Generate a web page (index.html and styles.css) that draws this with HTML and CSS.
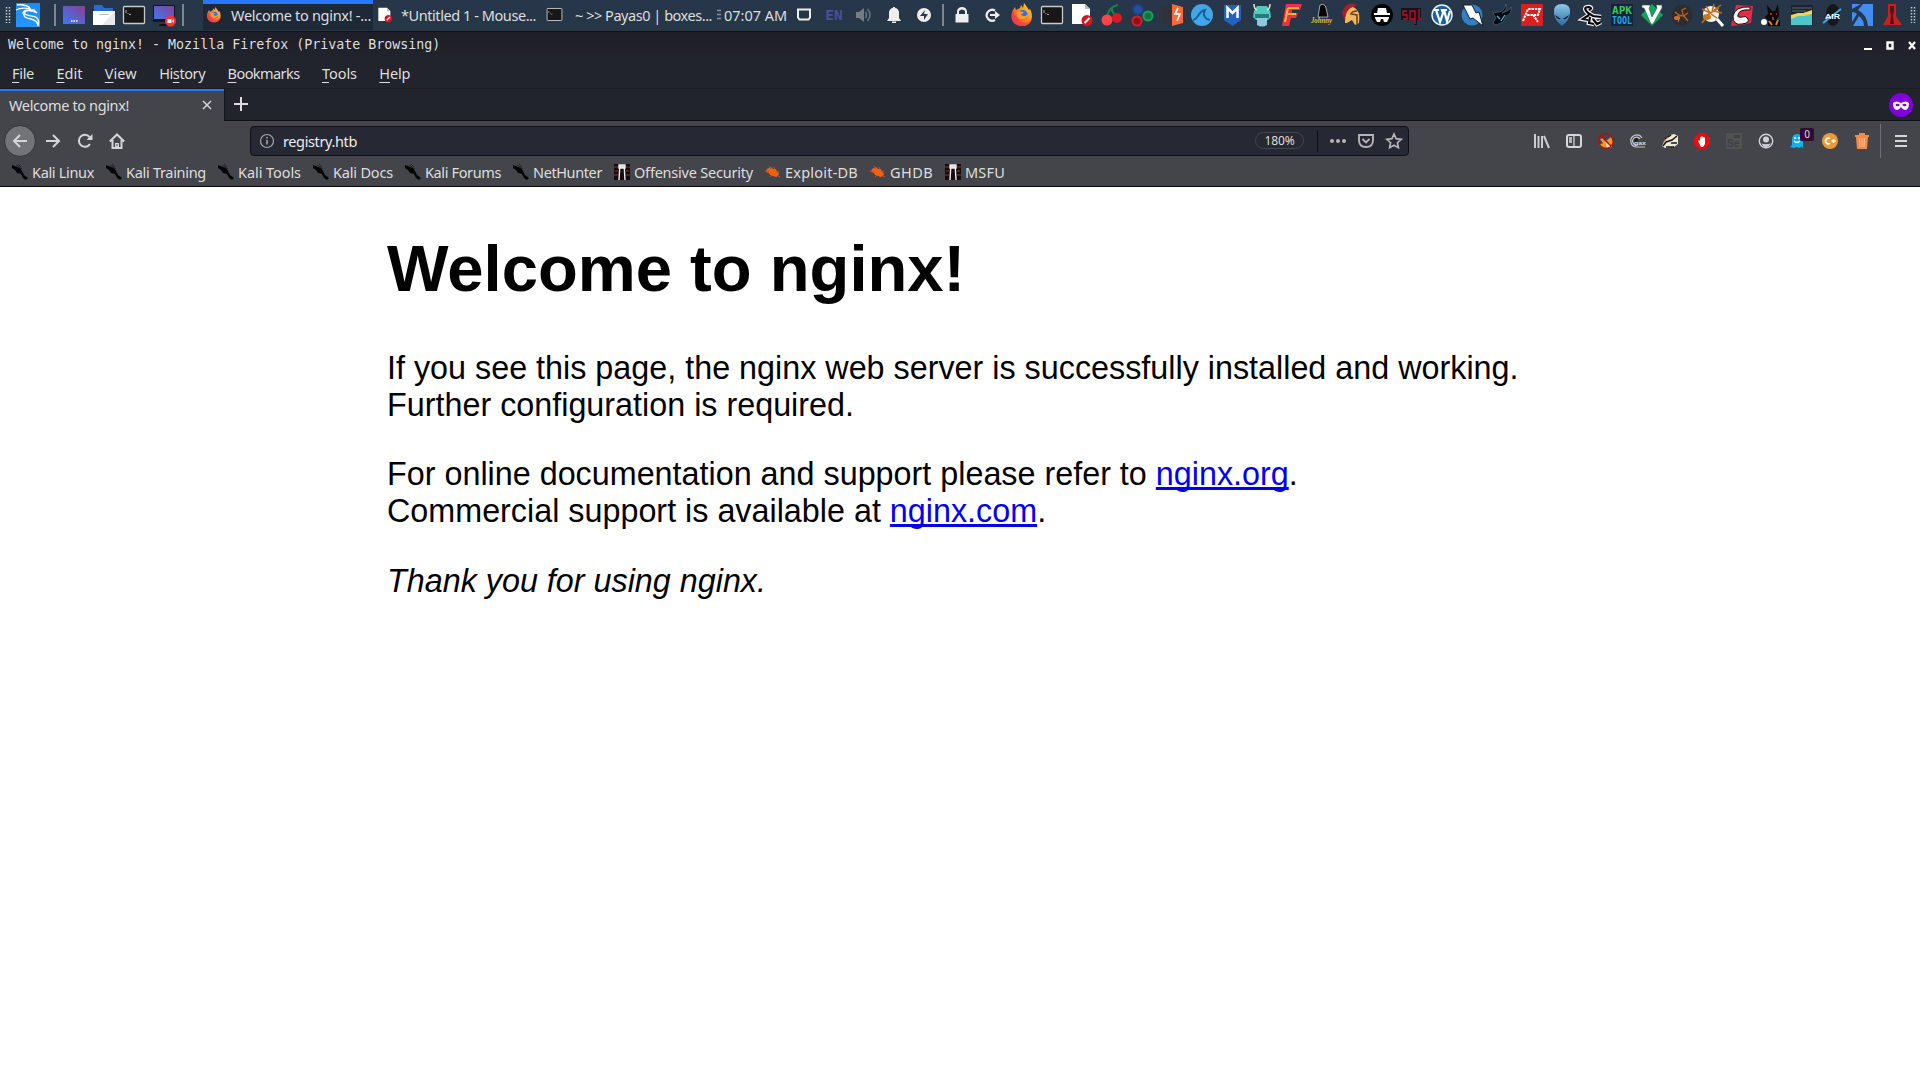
FILE: index.html
```html
<!DOCTYPE html>
<html lang="en">
<head>
<meta charset="utf-8">
<title>Welcome to nginx!</title>
<link rel="stylesheet" href="styles.css">
</head>
<body>
<svg class="defs" width="0" height="0" aria-hidden="true">
  <defs>
    <linearGradient id="desk" x1="0" y1="1" x2="1" y2="0"><stop offset="0" stop-color="#3a7af0"/><stop offset="1" stop-color="#8a3f96"/></linearGradient>
    <linearGradient id="blue" x1="0" y1="0" x2="0" y2="1"><stop offset="0" stop-color="#1a8df5"/><stop offset="1" stop-color="#2795ff"/></linearGradient>
    <linearGradient id="fire" x1="1" y1="0" x2="0" y2="1"><stop offset="0" stop-color="#ffe23c"/><stop offset=".45" stop-color="#ff8a1c"/><stop offset="1" stop-color="#f0245c"/></linearGradient>
    <linearGradient id="alien" x1="0" y1="0" x2="0" y2="1"><stop offset="0" stop-color="#8cc8ee"/><stop offset="1" stop-color="#2c6a9c"/></linearGradient>
    <symbol id="firefox" viewBox="0 0 24 24"><path d="M3 7l2-3 1 3 4-2 1-3 2 3 1-5 3 4 2 3 1-1c4 7 2 17-8 17C3 23-1 15 3 7z" fill="url(#fire)"/><path d="M3 8c-4 9 2 15 9 15 6 0 10-4 10-8-3 5-8 6-12 3L5 12z" fill="#f3374f" opacity=".65"/><circle cx="12.5" cy="12" r="5" fill="#2c6ff0"/><path d="M7 9c2-2 4 0 7 0l-3 3c3 2 5 1 7-1 0 6-8 8-11 2z" fill="#ff9a24"/></symbol>
    <symbol id="term" viewBox="0 0 24 24"><rect x="1.5" y="3.5" width="21" height="17" rx="1" fill="#171717" stroke="#c9c9c9" stroke-width="1.3"/><path d="M4 7v3M5.5 10.5h1M7 11.5h2" stroke="#aaa" stroke-width="1"/></symbol>
    <symbol id="note" viewBox="0 0 24 24"><path d="M2 1h13l5 5v15H2z" fill="#fff"/><path d="M15 1l5 5h-5z" fill="#bbb"/><circle cx="17" cy="17.500" r="5.500" fill="#d9141e"/><path d="M14.500 20l5-5" stroke="#fff" stroke-width="2"/></symbol>
    <symbol id="kali" viewBox="0 0 16 16"><path d="M0 1l5 2 3 1 2 3 2 4 4 3-2 2-3-2-2-4-4-1-2-3-3-2z" fill="#050505"/><path d="M4 1l6 4M6 0l3 3" stroke="#1c1d20" stroke-width=".8"/></symbol>
    <symbol id="offsec" viewBox="0 0 16 16"><path d="M0 0h16v16H0z" fill="#170b0d"/><path d="M0 3h4M1 7h3M0 11h4M12 3h4M12 7h3M12 11h4" stroke="#783c3a" stroke-width="1"/><path d="M5 1h6v3H5zM5.700 4L5 16M10.300 4l.7 12" fill="#ddd" stroke="#eee" stroke-width="1.400"/></symbol>
    <symbol id="edb" viewBox="0 0 16 16"><path d="M2 5l2-1 2-1 2 2 3 0 1 3 2 1-1 3-2 1-3-1-3-1-1-2-3-1z" fill="#f26113"/><path d="M0 7l4 1M4 2l2 3M9 3l1 3M5 13l2-2M14 7l-3 1M15 13l-3-2" stroke="#bd552b"/></symbol>
  </defs>
</svg>

<header class="panel">
  <div class="panel-left">
    <svg class="grip" viewBox="0 0 6 16"><path d="M1.500 0v16M4.500 0v16" stroke="#c5ccd6" stroke-width="1.500" stroke-dasharray="1.500 1.500"/></svg>
    <svg class="dragon" viewBox="0 0 24 24"><path d="M0 0h24v24H0z" fill="url(#blue)"/><path d="M1 2c6-1 11 1 13 3M0 7c5-3 10-2 15-1M5 2c4 0 7 1 9 3M7 10c1-4 6-3 11-3l3 3-5-2c-4-1-8 0-7 3 1 2 9 1 12 4 2 2 2 5 1 8 0-4-3-6-7-7-5-1-8-2-7-6z" fill="none" stroke="#fff" stroke-width="1.300"/></svg>
    <i class="rule"></i>
    <svg class="launch" viewBox="0 0 24 24"><path d="M1 3h22v18H1z" fill="url(#desk)"/><path d="M9 18h1.500M11.500 18H13M14 18h1.500" stroke="#fff" stroke-width="1.500"/></svg>
    <svg class="launch" viewBox="0 0 24 24"><path d="M2 2h8l2 3h9v8H2z" fill="#2d68db"/><path d="M1 8h22v14H1z" fill="#fff"/><path d="M23 8v14H10z" fill="#e9e9e9"/><path d="M7.500 11.500h9" stroke="#bbb"/></svg>
    <svg class="launch"><use href="#term"/></svg>
    <svg class="launch" viewBox="0 0 24 24"><path d="M8 21h8l1 2H7z" fill="#111"/><path d="M1 2h22v17H1z" fill="#15151d"/><path d="M2 3h20v13H2z" fill="url(#desk)"/><circle cx="18.500" cy="18" r="5.500" fill="#f33"/><path d="M15.500 16h4v4h-4zM20 18l2-2v4z" fill="#fff"/></svg>
    <i class="rule rule-end"></i>
  </div>
  <nav class="tasks">
    <div class="task active"><svg class="task-icon"><use href="#firefox"/></svg><span data-fit="140">Welcome to nginx! -...</span></div>
    <div class="task"><svg class="task-icon"><use href="#note"/></svg><span data-fit="135">*Untitled 1 - Mouse...</span></div>
    <div class="task wide"><svg class="task-icon"><use href="#term"/></svg><span data-fit="137">~ &gt;&gt; Payas0 | boxes...</span></div>
  </nav>
  <svg class="mini-grip" viewBox="0 0 4 12"><path d="M0 1.500h4M0 5.500h4M0 9.500h4" stroke="#8a929c" stroke-width="1.500"/></svg>
  <time class="clock" data-fit="63">07:07 AM</time>
  <div class="dock tray">
    <svg viewBox="0 0 24 24"><path d="M6 6.500h12v8l-1.500 2h-9L6 14.500z" fill="none" stroke="#eee" stroke-width="2"/></svg>
    <b class="lang">EN</b>
    <svg viewBox="0 0 24 24"><path d="M4 9h3l5-4v14l-5-4H4z" fill="#727d87"/><path d="M13.500 9q2 3 0 6M15.500 6q5 6 0 12" fill="none" stroke="#66727d" stroke-width="1.500"/></svg>
    <svg viewBox="0 0 24 24"><path d="M5 18l2-3V9q1-4 4-4V4h2v1q3 0 4 4v6l2 3zM10 18.500h4v1.500h-4z" fill="#eee"/></svg>
    <svg viewBox="0 0 24 24"><circle cx="12" cy="12" r="7" fill="#eee"/><path d="M13 7l-5 6h4v4l4-6h-4z" fill="#27394a"/></svg>
  </div>
  <i class="rule rule-tray"></i>
  <div class="dock">
    <svg viewBox="0 0 24 24"><path d="M5.500 11h13v8.500h-13zM7 11V8q1-4 5-4t5 4v3h-2V8q-3-3-6 0v3z" fill="#eee"/></svg>
    <svg viewBox="0 0 24 24"><path d="M15 7.500A5.500 5.500 0 1 0 15 17M10 12h8" fill="none" stroke="#eee" stroke-width="2.200"/><path d="M15 8l5 4-5 4z" fill="#eee"/></svg>
    <svg><use href="#firefox"/></svg>
    <svg><use href="#term"/></svg>
    <svg viewBox="0 0 24 24"><use href="#note"/></svg>
    <svg viewBox="0 0 24 24"><path d="M7 13Q9 4 18 2M12 5q0 5 4 8" fill="none" stroke="#18824e" stroke-width="2"/><circle cx="7" cy="17" r="5.500" fill="#ff4547"/><circle cx="17" cy="15" r="5" fill="#d51c25"/></svg>
    <svg viewBox="0 0 24 24"><circle cx="8" cy="6.500" r="4.800" fill="#274fa0" stroke="#1d428d" stroke-width="2"/><circle cx="18" cy="13" r="4.500" fill="#12733f" stroke="#14a25b" stroke-width="2"/><circle cx="7" cy="18" r="4.500" fill="#921018" stroke="#d0202b" stroke-width="2"/></svg>
    <svg viewBox="0 0 24 24"><path d="M1 4l11-2v20L1 20z" fill="#303139"/><path d="M12 1l11 3v16l-11 3z" fill="#ff6734"/><path d="M18 5l-3 6h5l-3 7" stroke="#fff" stroke-width="1.700" fill="none"/></svg>
    <svg viewBox="0 0 24 24"><circle cx="12" cy="12" r="11" fill="#43a6e8"/><path d="M3 17c5 0 5-9 12-10-3 5 0 9 5 10" stroke="#16639c" stroke-width="2" fill="none"/></svg>
    <svg viewBox="0 0 24 24"><path d="M4 2h17v15l-8.500 6L4 17z" fill="#2261bd"/><path d="M7.500 15V5l5 5 5-5v10" fill="none" stroke="#fff" stroke-width="2.500"/></svg>
    <svg viewBox="0 0 24 24"><path d="M4 8l3-5h10l3 5 1 6-3 3H6l-3-3z" fill="#53c9bd"/><path d="M5 11h14v4H5z" fill="#247b80"/><path d="M7 15h10v7q-5 3-10 0z" fill="#8fc6d8"/><path d="M4 1q0 5 3 6M20 1q0 5-3 6" fill="none" stroke="#ece7c5" stroke-width="1.500"/></svg>
    <svg viewBox="0 0 24 24"><path d="M6 1h16l-2 6h-8v3h6l-2 5h-5l-2 8H2z" fill="#f12e48"/><path d="M8 5h11M8 5L5 19M8 11h8" fill="none" stroke="#ffb638" stroke-width="2"/></svg>
    <svg viewBox="0 0 24 24"><path d="M10 2q5-2 6 3l2 9H8z" fill="#030303" stroke="#ddd" stroke-width=".7"/><text x="1" y="20" textLength="21" lengthAdjust="spacingAndGlyphs" class="johnny">Johnny</text></svg>
    <svg viewBox="0 0 24 24"><path d="M2 10Q6-3 17 2L9 7 5 18z" fill="#a41f26"/><path d="M5 20Q5 6 13 4q8 3 6 16l-4 2-3-5-5 3z" fill="#efb95c"/><path d="M17 8q-5 0-6 3l6 1v9" fill="none" stroke="#76351e" stroke-width="1.500"/></svg>
    <svg viewBox="0 0 24 24"><circle cx="12" cy="12" r="11" fill="#040404"/><path d="M8 5h8l1 5h3v2H4v-2h3zM5 14h14v1l-2 4h-3l-1-3h-2l-1 3H7l-2-4z" fill="#fff"/></svg>
    <svg viewBox="0 0 24 24"><path d="M1 5h20v12h-4v5h-3v-5H1z" fill="#1a1018"/><path d="M7 8H3v4h4v4H3M10 8h5v8h-5zM15 16v5M19 6v10h3" fill="none" stroke="#b91424" stroke-width="1.300"/></svg>
    <svg viewBox="0 0 24 24"><circle cx="12" cy="12" r="10" fill="#1d609e" stroke="#e8f1fa" stroke-width="1.500"/><path d="M4 7h5M6 7l4 12 3-9-1-3h5M14 7l3 11 3-10" fill="none" stroke="#fff" stroke-width="2.200"/></svg>
    <svg viewBox="0 0 24 24"><circle cx="12" cy="12" r="10.500" fill="#347fc4"/><path d="M3 2h9l4 8 3-1 4 14-10-8-3 1z" fill="#fff" stroke="#101c28"/></svg>
    <svg viewBox="0 0 24 24"><path d="M9 9q6-1 7-8 2 6-4 9l5-2q3-1 4-4 1 7-5 9l-3 6-7 3-3-2 3-5-3-5z" fill="#05090e" stroke="#57819b" stroke-width=".5"/><path d="M7 13l3 3M15 12l-4 6" stroke="#46b3d4" stroke-width="1.300"/></svg>
    <svg viewBox="0 0 24 24"><rect x="1" y="1" width="22" height="22" rx="1" fill="#d91f20"/><path d="M3 18L8 6h12l-2 6H6m7 0l5 7" fill="none" stroke="#fff" stroke-width="2" stroke-dasharray="2.500 .8"/></svg>
    <svg viewBox="0 0 24 24"><path d="M4 10q-1-9 8-9t8 9q-1 8-8 13-7-5-8-13z" fill="url(#alien)"/><path d="M5 12l6 4q-4 1-6-4zM19 12l-6 4q4 1 6-4z" fill="#14182a"/></svg>
    <svg viewBox="0 0 24 24"><path d="M8 10Q2 4 9 4q4 1 0 3M8 10l5 3 8 1M9 12l-6 4 5 1M10 14l-1 6 5 1M13 16l4 5 4-2" fill="none" stroke="#f2f2f2" stroke-width="4.500"/><path d="M8 10Q2 4 9 4q4 1 0 3M8 10l5 3 8 1M9 12l-6 4 5 1M10 14l-1 6 5 1M13 16l4 5 4-2" fill="none" stroke="#060606" stroke-width="2.200"/></svg>
    <svg viewBox="0 0 24 24"><path d="M1 1h22v22H1z" fill="#12253a"/><g class="apk"><text x="2" y="11" textLength="20" lengthAdjust="spacingAndGlyphs" fill="#3dc55c">APK</text><text x="2" y="21" textLength="20" lengthAdjust="spacingAndGlyphs" fill="#19a7ed">TOOL</text></g></svg>
    <svg viewBox="0 0 24 24"><path d="M12 1l11 11-11 11L1 12z" fill="#0aa85a"/><path d="M2 2h8v2L9 5l3 9 5-9-1-3h6v3l-9 16h-2L4 5H2z" fill="#fff" stroke="#235b49" stroke-width=".6"/></svg>
    <svg viewBox="0 0 24 24"><circle cx="12" cy="12" r="10.500" fill="#2c2d33"/><path d="M5 15l4-3 4 1 5-3M9 12l-4-3M10 13l-2 6M13 12l5 6M13 12l-1-5 4-2" fill="none" stroke="#bc681c" stroke-width="1.200"/><ellipse cx="7" cy="15" rx="3" ry="2" fill="#cb741d"/></svg>
    <svg viewBox="0 0 24 24"><circle cx="11" cy="11" r="8" fill="#f2f2f2"/><path d="M17 16l6 7" stroke="#fff" stroke-width="3"/><path d="M4 15l6-5 9-5M2 6l8 4-4-7M8 12l-6 8M11 11l6 4M12 9l2-8M14 8l8 2M14 7l7-5" fill="none" stroke="#c66c12" stroke-width="1.500"/><ellipse cx="7" cy="14" rx="4" ry="3" fill="#cf7716"/></svg>
    <svg viewBox="0 0 24 24"><path d="M6 2l17 1-2 17-9 2-11 1z" fill="#e32b49"/><path d="M20 4Q5 3 3 13q0 10 9 8 8-1 6-5-2-4-6-2-5 1-4-2Q9 6 20 7z" fill="#f6f6f6" stroke="#111"/></svg>
    <svg viewBox="0 0 24 24"><path d="M8 11L7 2l5 6h3l3-7 1 12-3 4h4v6H8v-6l-3-3z" fill="#090909"/><path d="M10 11h2M16 11h1M13 14v3" stroke="#d63b36" stroke-width="1.500"/><path d="M9 18l3 4M18 17l-2 5" stroke="#d98526" stroke-width="2"/><circle cx="4" cy="19" r="3" fill="#fff"/></svg>
    <svg viewBox="0 0 24 24"><path d="M1 2h22v20H1z" fill="#19242e"/><path d="M1 14l7-3h5l9-3v14H1z" fill="#4cc6cb"/><path d="M1 12l7-2h5l9-3v4l-8 2H8l-7 3z" fill="#edd45f"/><path d="M2 5h20M2 8h14" stroke="#666"/></svg>
    <svg viewBox="0 0 24 24"><ellipse cx="13" cy="12" rx="7" ry="11" fill="#15171b"/><path d="M3 20L21 6" stroke="#3baaea" stroke-width="2"/><text x="5" y="16" textLength="15" lengthAdjust="spacingAndGlyphs" class="air">AIR</text></svg>
    <svg viewBox="0 0 24 24"><path d="M2 1h9L2 6zM13 1h10v22h-5Q17 12 8 7zM2 9q3 0 5 2l-5 8zM9 13q5 4 5 10H3z" fill="#438cf3"/></svg>
    <svg viewBox="0 0 24 24"><path d="M8 1h8v12l6 9H3l5-9z" fill="#c91e23"/><path d="M10 3h4v5l-1 5 1 8h-4l1-8-1-5z" fill="#56141a"/></svg>
  </div>
  <svg class="grip grip-right" viewBox="0 0 6 16"><path d="M1.500 0v16M4.500 0v16" stroke="#c5ccd6" stroke-width="1.500" stroke-dasharray="1.500 1.500"/></svg>
</header>

<section class="titlebar">
  <span class="title">Welcome to nginx! - Mozilla Firefox (Private Browsing)</span>
  <svg class="window-buttons" viewBox="0 0 52 10"><path d="M0 8h8" stroke="#fff" stroke-width="2"/><path d="M23.500 1.500h5v6h-5z" fill="none" stroke="#fff" stroke-width="2.400"/><path d="M45 1l6 7M51 1l-6 7" stroke="#fff" stroke-width="2.200"/></svg>
</section>

<nav class="menubar">
  <span data-fit="22"><u>F</u>ile</span><span data-fit="26"><u>E</u>dit</span><span data-fit="32"><u>V</u>iew</span><span data-fit="46">Hi<u>s</u>tory</span><span data-fit="72"><u>B</u>ookmarks</span><span data-fit="35"><u>T</u>ools</span><span data-fit="31"><u>H</u>elp</span>
</nav>

<div class="tabstrip">
  <div class="tab"><span data-fit="120">Welcome to nginx!</span><svg viewBox="0 0 10 10"><path d="M1 1l8 8M9 1L1 9" stroke="#d5d5d5" stroke-width="1.500"/></svg></div>
  <div class="tab-rest"><svg class="plus" viewBox="0 0 14 14"><path d="M7 0v14M0 7h14" stroke="#ddd" stroke-width="2"/></svg>
  <svg class="mask" viewBox="0 0 24 24"><circle cx="12" cy="12" r="12" fill="#8000d7"/><path d="M4 10q3-3 8 0 5-3 8 0 0 7-4 7-2 0-4-3-2 3-4 3-4 0-4-7z" fill="#fff"/><ellipse cx="8.500" cy="12" rx="2" ry="1.200" fill="#8000d7"/><ellipse cx="15.500" cy="12" rx="2" ry="1.200" fill="#8000d7"/></svg></div>
</div>

<div class="toolbar">
  <div class="nav-buttons">
    <button class="back"><svg viewBox="0 0 16 16"><path d="M15 8H2M8 2L2 8l6 6" class="stroke"/></svg></button>
    <svg viewBox="0 0 16 16"><path d="M1 8h13M8 2l6 6-6 6" class="stroke"/></svg>
    <svg viewBox="0 0 16 16"><path d="M13 11a6 6 0 1 1-.5-7" class="stroke"/><path d="M15.500 1v6h-6z" fill="#d6d6d6"/></svg>
    <svg viewBox="0 0 16 16"><path d="M.8 8.500L8 1.500l7.200 7M3.500 7v8h9V7" class="stroke"/><path d="M6 15v-5h4v5z" fill="#d6d6d6"/><path d="M8 11v2" stroke="#45474d"/></svg>
  </div>
  <div class="urlbar">
    <svg class="info" viewBox="0 0 16 16"><circle cx="8" cy="8" r="6.500" fill="none" stroke="#a7a8ad" stroke-width="1.200"/><path d="M8 7v4.500M8 4v1.500" stroke="#a7a8ad" stroke-width="1.600"/></svg>
    <span class="address" data-fit="74">registry.htb</span>
    <span class="zoom"><span data-fit="30">180%</span></span>
    <i></i>
    <svg viewBox="0 0 16 16"><circle cx="2" cy="8" r="2" fill="#b5b5b9"/><circle cx="8" cy="8" r="2" fill="#b5b5b9"/><circle cx="14" cy="8" r="2" fill="#b5b5b9"/></svg>
    <svg viewBox="0 0 16 16"><path d="M1 2h14v5q0 7-7 7T1 7zM4.500 6L8 9.500 11.500 6" fill="none" stroke="#b5b5b9" stroke-width="1.900"/></svg>
    <svg viewBox="0 0 16 16"><path d="M8 1l2.100 4.700 5.100.6-3.800 3.400 1 5L8 12.200l-4.400 2.500 1-5L.8 6.300l5.100-.6z" fill="none" stroke="#b5b5b9" stroke-width="1.700"/></svg>
  </div>
  <div class="extensions">
    <svg viewBox="0 0 16 16"><path d="M1 1v14M4.500 3v12M8 3v12M10 3l5 12" stroke="#ccc" stroke-width="2"/></svg>
    <svg viewBox="0 0 16 16"><rect x="1" y="2" width="14" height="12" rx="2" class="stroke"/><path d="M8 2v12M3 5h3M3 7h3M3 9h3" stroke="#d6d6d6" stroke-width="1.300"/></svg>
    <svg viewBox="0 0 16 16"><path d="M2 6l3-1 3 3 5-4 2 5-2 5-7 1-5-3 4-2z" fill="#ec9828"/><path d="M7 8l4 2 3 4-5 1z" fill="#f2e4bd"/><circle cx="8" cy="8" r="7.300" fill="none" stroke="#bc0b0b" stroke-width="1.300"/><path d="M3 3l10 10" stroke="#bc0b0b" stroke-width="1.500"/></svg>
    <svg viewBox="0 0 16 16"><path d="M12 5A6 6 0 1 0 7 14h8M10 6a4 4 0 1 0-4 6" fill="none" stroke="#c3c3c3" stroke-width="1.200"/><circle cx="6" cy="7" r="2" fill="#222"/><text x="4" y="12" textLength="12" lengthAdjust="spacingAndGlyphs" class="gax">gax</text></svg>
    <svg viewBox="0 0 16 16"><path d="M0 13L3 7l5-5 4-1 4 2v8l-4 3-9 1z" fill="#eee7d8"/><path d="M1 13l3-4 6-2 5-4M3 6l6-4M9 10h6M4 14h8" fill="none" stroke="#181818" stroke-width="1.500"/><path d="M1 10l5-6" stroke="#ee833a" stroke-width=".8"/></svg>
    <svg viewBox="0 0 16 16"><path d="M5 0h6l5 5v6l-5 5H5l-5-5V5z" fill="#f2080c"/><path d="M4 8l1-1 1 1V4h1l1-1 1 1h1l1 1v6l-2 3H7z" fill="#fff"/></svg>
    <svg viewBox="0 0 16 16"><path d="M0 0h16v16H0z" fill="#515151"/><path d="M8 2h6v3H8z" fill="#3d4047"/><text x="1" y="14" class="selenium">Se</text></svg>
    <svg viewBox="0 0 16 16"><circle cx="8" cy="8" r="6.700" fill="none" stroke="#d2d2d2" stroke-width="1.400"/><circle cx="8" cy="6.500" r="3" fill="#d2d2d2"/><path d="M3.500 10.500q4.500 1.500 9 0-2 3.500-4.500 3.500t-4.500-3.500z" fill="#d2d2d2"/></svg>
    <div class="ghost"><svg viewBox="0 0 16 16"><path d="M2 7q0-6 5-6t6 6v7l1 1-3-1-2 1-2-1-3 1-4-1 2-2z" fill="#12aef2"/><circle cx="5" cy="5" r="1" fill="#fff"/><circle cx="9" cy="5" r="1" fill="#fff"/><path d="M4 8q3 3 6 0" fill="none" stroke="#fff" stroke-width="1.300"/></svg><b>0</b></div>
    <svg viewBox="0 0 16 16"><circle cx="8" cy="8" r="8" fill="#eb9b35"/><path d="M8 5.700A2.800 2.800 0 1 0 8 10.300M9.500 8h4M11.500 6v4" fill="none" stroke="#fff" stroke-width="1.600"/></svg>
    <svg viewBox="0 0 16 16"><path d="M1 2h4V0h6v2h4v2h-1l-1 12H3L2 4H1z" fill="#f58a43"/><path d="M5.500 5l.5 9M8 5v9M10.500 5l-.5 9" stroke="#ffb98b" stroke-width="1.200"/></svg>
    <i></i>
    <svg class="burger" viewBox="0 0 16 16"><path d="M2 3h12M2 8h12M2 13h12" stroke="#d6d6d6" stroke-width="2"/></svg>
  </div>
</div>

<nav class="bookmarks">
  <a><svg><use href="#kali"/></svg><span data-fit="62">Kali Linux</span></a>
  <a><svg><use href="#kali"/></svg><span data-fit="80">Kali Training</span></a>
  <a><svg><use href="#kali"/></svg><span data-fit="63">Kali Tools</span></a>
  <a><svg><use href="#kali"/></svg><span data-fit="60">Kali Docs</span></a>
  <a><svg><use href="#kali"/></svg><span data-fit="76">Kali Forums</span></a>
  <a><svg><use href="#kali"/></svg><span data-fit="69">NetHunter</span></a>
  <a><svg><use href="#offsec"/></svg><span data-fit="119">Offensive Security</span></a>
  <a><svg><use href="#edb"/></svg><span data-fit="73">Exploit-DB</span></a>
  <a><svg><use href="#edb"/></svg><span data-fit="43">GHDB</span></a>
  <a><svg><use href="#offsec"/></svg><span data-fit="40">MSFU</span></a>
</nav>

<main class="page">
  <h1>Welcome to nginx!</h1>
  <p>If you see this page, the nginx web server is successfully installed and working. Further configuration is required.</p>
  <p>For online documentation and support please refer to <a href="#">nginx.org</a>.<br>Commercial support is available at <a href="#">nginx.com</a>.</p>
  <p><em>Thank you for using nginx.</em></p>
</main>
<script src="labels.js"></script>
</body>
</html>
```
FILE: styles.css
```css
* { box-sizing: border-box; }
html, body { margin: 0; height: 100%; overflow: hidden; background: #fff; }
body { display: flex; flex-direction: column; font: 14.5px/20px "Noto Sans", "Open Sans", sans-serif; color: #dededf; }
svg { display: block; flex: none; overflow: visible; }
i { flex: none; }
.defs { position: absolute; }
[data-fit] { white-space: nowrap; display: block; flex: none; }

.panel { height: 32px; flex: none; display: flex; align-items: center; padding: 0 4px 2px 5px; background: linear-gradient(#27364a, #263747); border-bottom: 1px solid #101116; }
.panel-left { display: flex; align-items: center; width: 198px; flex: none; }
.grip { width: 6px; height: 16px; }
.grip-right { margin-left: 3px; }
.dragon { width: 24px; height: 24px; margin-left: 5px; }
.rule { width: 2px; height: 22px; background: #7e868f; margin: 0 6px 0 14px; }
.rule-end { margin: 0 0 0 6px; }
.launch { width: 24px; height: 24px; margin-right: 6px; }
.launch:nth-last-of-type(1) { margin-right: 0; }
.tasks { display: flex; height: 30px; }
.task { display: flex; align-items: center; gap: 8px; width: 170px; padding-left: 4px; }
.task.active { gap: 9px; padding: 0 0 4px 3px; background: #1e2938; border-top: 4px solid #2777ff; }
.task-icon { width: 16px; height: 16px; }
.task.wide .task-icon { width: 17px; height: 17px; }
.task.wide { gap: 12px; padding-left: 3px; }
.mini-grip { width: 4px; height: 12px; margin: 0 0 0 4px; }
.clock { margin-left: 3px; }
.dock { display: flex; align-items: center; }
.dock > * { width: 24px; height: 24px; margin: 0 3px; }
.tray { margin-left: 2px; }
.lang { font: bold 14.5px/24px "DejaVu Sans Mono", monospace; color: #47509c; text-align: center; flex: none; }
.rule-tray { margin: 0 3px 0 3px; }
.johnny { font: italic bold 8px "Liberation Serif", serif; fill: #e5c12e; }
.apk { font: 900 10px "DejaVu Sans Mono", monospace; }
.air { font: bold 8px "Liberation Sans", sans-serif; fill: #fff; }

.titlebar { height: 28px; flex: none; display: flex; align-items: center; justify-content: space-between; padding: 0 4px 2px 8px; background: linear-gradient(#1d1e27, #22242d); }
.title { font: 13.3px/20px "DejaVu Sans Mono", monospace; }
.window-buttons { width: 52px; height: 10px; margin-top: 2px; }

.menubar { height: 28px; flex: none; display: flex; align-items: center; gap: 22.4px; padding: 0 0 2px 12px; background: #22242d; }
.menubar u { text-underline-offset: 3px; text-decoration-thickness: 1px; text-decoration-skip-ink: none; }

.tabstrip { height: 33px; flex: none; display: flex; background: #43454b; border-top: 1px solid #1b1d25; }
.tab { width: 224px; display: flex; align-items: center; justify-content: space-between; padding: 0 12px 2px 9px; border-top: 2px solid #2777ff; }
.tab svg { width: 10px; height: 10px; }
.tab-rest { flex: 1; display: flex; align-items: center; justify-content: space-between; padding: 0 7px 0 9px; background: #22242d; border-left: 1px solid #15161c; border-bottom: 1px solid #101116; }
.plus { width: 14px; height: 14px; margin-bottom: 1px; }
.mask { width: 24px; height: 24px; }

.toolbar { height: 39px; flex: none; display: flex; align-items: center; padding: 0 11px 0 4px; background: #43454b; }
.nav-buttons { width: 246px; display: flex; align-items: center; flex: none; gap: 16px; }
.nav-buttons svg { width: 16px; height: 16px; }
.back { width: 32px; height: 32px; margin-right: -7px; padding: 0; display: flex; align-items: center; justify-content: center; border: 1px solid #303238; border-radius: 50%; background: #737478; }
.stroke { fill: none; stroke: #d6d6d6; stroke-width: 2; }
.urlbar { width: 1159px; height: 30px; flex: none; display: flex; align-items: center; gap: 12px; padding: 0 6px 0 8px; background: #262833; border: 1px solid #101116; border-radius: 4px; }
.urlbar svg { width: 16px; height: 16px; }
.urlbar .info { margin-right: -4px; }
.address { color: #ececec; padding-top: 1px; }
.zoom { height: 17px; width: 49px; margin-left: auto; margin-right: 1px; display: flex; align-items: center; justify-content: center; border: 1px solid #43454f; border-radius: 9px; font-size: 12px; line-height: 15px; }
.urlbar i { width: 1px; height: 22px; background: #101116; }
.extensions { margin-left: auto; display: flex; align-items: center; gap: 16px; }
.extensions > svg, .ghost svg { width: 16px; height: 16px; }
.extensions i { width: 1px; height: 34px; margin: 0 -5px 0 -6px; background: #707177; }
.extensions .burger { margin-left: 1px; }
.ghost { position: relative; }
.ghost b { position: absolute; left: 10px; top: -5px; width: 14px; height: 13px; border-radius: 2px; background: #350936; font: 10px/12px "Noto Sans", sans-serif; text-align: center; }
.gax { font: bold 6px "Liberation Sans", sans-serif; fill: #ddd; }
.selenium { font: bold 10px "Liberation Sans", sans-serif; fill: #3d4047; }

.bookmarks { height: 27px; flex: none; display: flex; align-items: center; gap: 12px; padding: 0 0 2px 12px; background: #43454b; border-bottom: 1px solid #08080a; }
.bookmarks a { display: flex; align-items: center; gap: 4px; }
.bookmarks svg { width: 16px; height: 16px; }

.page { width: 1146px; margin: 0 auto; font: 32.32px/37px "Liberation Sans", Arial, sans-serif; color: #000; }
.page h1 { font-size: 65.2px; line-height: 74px; margin: 45px 0 43.6px; }
.page p { margin: 0 0 32.5px; }
.page a { color: #00e; text-decoration: underline; text-decoration-skip-ink: none; }
```
FILE: labels.js
```js
document.querySelectorAll('[data-fit]').forEach(function (label) {
  var range = document.createRange();
  range.selectNodeContents(label);
  var width = Number(label.dataset.fit);
  var count = label.textContent.length;
  label.style.letterSpacing = (width - range.getBoundingClientRect().width) / count + 'px';
  label.style.width = width + 'px';
});
```
